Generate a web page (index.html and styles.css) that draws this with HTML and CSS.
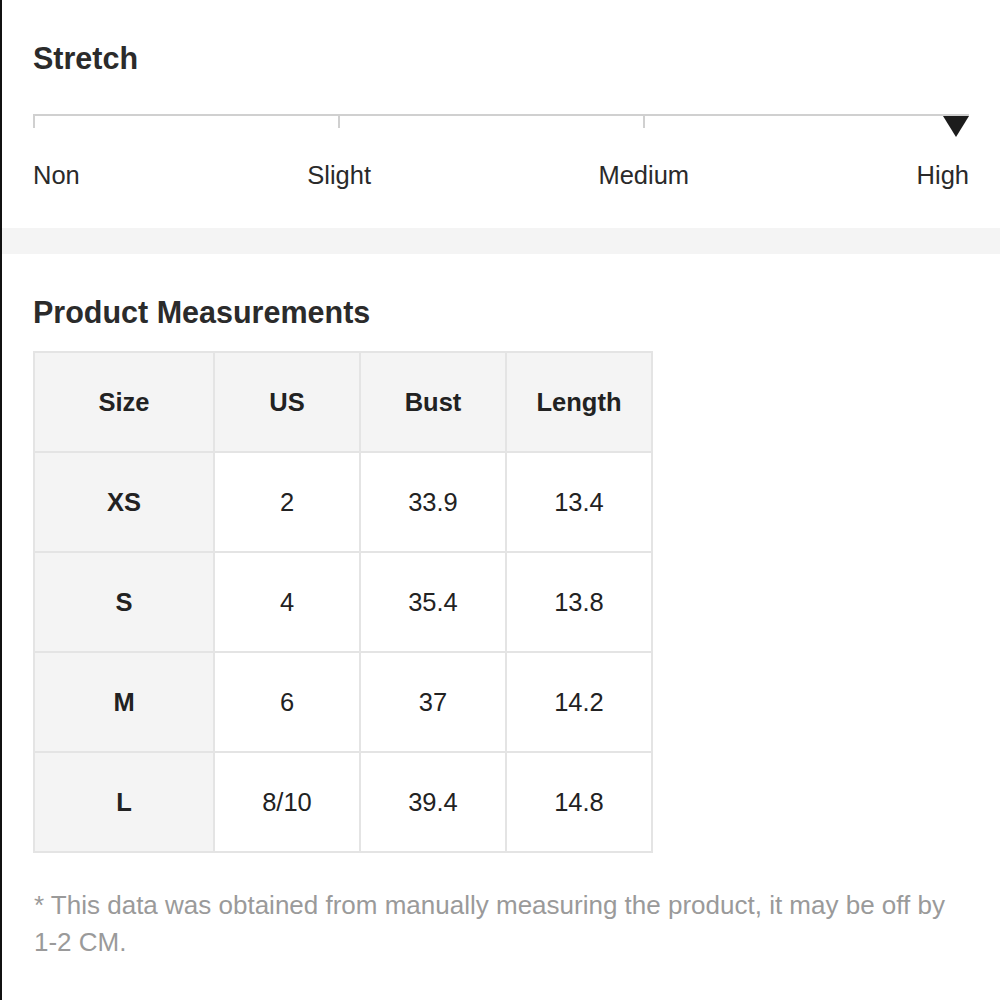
FILE: index.html
```html
<!DOCTYPE html>
<html lang="en">
<head>
    <meta charset="UTF-8">
    <meta name="viewport" content="width=device-width, initial-scale=1.0">
    <title>Size Guide</title>
    <link rel="stylesheet" href="styles.css">
</head>
<body>
    <div class="page">
        <section class="stretch">
            <div class="section-title">Stretch</div>
            <div class="scale">
                <div class="track">
                    <span class="seg"></span>
                    <span class="seg"></span>
                    <span class="seg"></span>
                    <span class="seg last"></span>
                </div>
                <span class="marker"></span>
            </div>
            <div class="scale-labels">
                <span>Non</span>
                <span>Slight</span>
                <span>Medium</span>
                <span>High</span>
            </div>
        </section>

        <div class="divider"></div>

        <section class="measurements">
            <div class="section-title">Product Measurements</div>
            <table class="size-table">
                <thead>
                    <tr>
                        <th>Size</th>
                        <th>US</th>
                        <th>Bust</th>
                        <th>Length</th>
                    </tr>
                </thead>
                <tbody>
                    <tr><th>XS</th><td>2</td><td>33.9</td><td>13.4</td></tr>
                    <tr><th>S</th><td>4</td><td>35.4</td><td>13.8</td></tr>
                    <tr><th>M</th><td>6</td><td>37</td><td>14.2</td></tr>
                    <tr><th>L</th><td>8/10</td><td>39.4</td><td>14.8</td></tr>
                </tbody>
            </table>
            <p class="note">* This data was obtained from manually measuring the product, it may be off by <span class="nowrap">1-2 CM.</span></p>
        </section>
    </div>
</body>
</html>
```

FILE: styles.css
```css
body {
    margin: 0;
    font-family: 'Liberation Sans', Arial, sans-serif;
    background: #fff;
    color: #222;
    border-left: 2px solid #111;
    min-height: 100vh;
    box-sizing: border-box;
}

.section-title {
    font-size: 30.5px;
    font-weight: 700;
    line-height: 36px;
    color: #2b2b2b;
}

.stretch {
    padding: 40px 31px 38px 31px;
}

.scale {
    position: relative;
    margin-top: 38px;
}

.track {
    display: grid;
    grid-template-columns: 305px 305px 305px 1fr;
    border-top: 2px solid #d0d0d0;
}

.seg {
    height: 12px;
    border-left: 2px solid #d0d0d0;
}

.seg.last {
    border-left: none;
}

.marker {
    position: absolute;
    right: 0;
    top: 2px;
    width: 0;
    height: 0;
    border-left: 13px solid transparent;
    border-right: 13px solid transparent;
    border-top: 21px solid #1c1c1c;
}

.scale-labels {
    display: flex;
    justify-content: space-between;
    margin-top: 32px;
    font-size: 25.5px;
    line-height: 30px;
    color: #2a2a2a;
}

.divider {
    height: 26px;
    background: #f4f4f4;
}

.measurements {
    padding: 40px 31px 0 31px;
}

.size-table {
    margin-top: 21px;
    border-collapse: collapse;
    border: 2px solid #e4e4e4;
    font-size: 25.5px;
    color: #222;
}

.size-table th,
.size-table td {
    border: 2px solid #e4e4e4;
    height: 98px;
    padding: 0;
    text-align: center;
    vertical-align: middle;
}

.size-table th {
    background: #f4f4f4;
    font-weight: 700;
}

.size-table thead th:first-child,
.size-table tbody th {
    width: 178px;
}

.size-table thead th:not(:first-child) {
    width: 144px;
}

.note {
    margin: 34px 0 0 1px;
    font-size: 26px;
    line-height: 37px;
    color: #9a9a9a;
}

.nowrap {
    white-space: nowrap;
}
```
